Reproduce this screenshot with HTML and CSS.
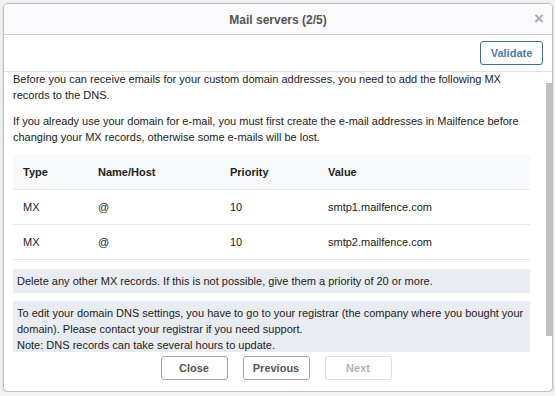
FILE: index.html
```html
<!doctype html>
<html>

<head>
    <title>Mail servers</title>
    <link rel="stylesheet" href="styles.css">
</head>

<body>
    <div class="dialog">
        <div class="dialogHeader">
            <span class="dialogTitle">Mail servers (2/5)</span>
            <span class="closeIcon">&times;</span>
        </div>

        <div class="toolbar">
            <button class="validateButton">Validate</button>
        </div>

        <div class="bodyWrapper">
            <div class="dialogBody" id="dialogBody">
                <div class="content">
                    <p>Before you can receive emails for your custom domain addresses, you need to add the following MX records to the DNS.</p>
                    <p>If you already use your domain for e-mail, you must first create the e-mail addresses in Mailfence before changing your MX records, otherwise some e-mails will be lost.</p>

                    <table class="recordsTable">
                        <thead>
                            <tr>
                                <th class="colType">Type</th>
                                <th class="colName">Name/Host</th>
                                <th class="colPriority">Priority</th>
                                <th>Value</th>
                            </tr>
                        </thead>
                        <tbody>
                            <tr>
                                <td>MX</td>
                                <td>@</td>
                                <td>10</td>
                                <td>smtp1.mailfence.com</td>
                            </tr>
                            <tr>
                                <td>MX</td>
                                <td>@</td>
                                <td>10</td>
                                <td>smtp2.mailfence.com</td>
                            </tr>
                        </tbody>
                    </table>

                    <div class="infoBox">Delete any other MX records. If this is not possible, give them a priority of 20 or more.</div>
                    <div class="infoBox">To edit your domain DNS settings, you have to go to your registrar (the company where you bought your domain). Please contact your registrar if you need support.<br>Note: DNS records can take several hours to update.</div>
                </div>
            </div>
            <div class="scrollThumb"></div>
        </div>

        <div class="dialogFooter">
            <button class="footerButton">Close</button>
            <button class="footerButton">Previous</button>
            <button class="footerButton" disabled>Next</button>
        </div>
    </div>

    <script src="script.js"></script>
</body>

</html>
```

FILE: styles.css
```css
* {
    margin: 0;
    padding: 0;
    box-sizing: border-box;
}

body {
    font: 11px "Liberation Sans", Arial, sans-serif;
    color: #222;
    background-color: #f3f3f4;
    padding: 3px 0 0 3px;
}

.dialog {
    width: 550px;
    height: 389px;
    border: solid 1px #bdbdc2;
    border-radius: 5px;
    background-color: white;
    box-shadow: 0 1px 4px rgba(0, 0, 0, 0.12);
    display: flex;
    flex-direction: column;
    overflow: hidden;
}

.dialogHeader {
    height: 31px;
    flex-shrink: 0;
    background-color: #faf9fc;
    border-bottom: solid 1px #c9c9d2;
    display: flex;
    align-items: center;
    justify-content: center;
    position: relative;
}

.dialogTitle {
    font-size: 12px;
    font-weight: bold;
    color: #555;
    margin-top: 1px;
}

.closeIcon {
    position: absolute;
    right: 8px;
    top: 5px;
    font-size: 17px;
    font-weight: bold;
    color: #adadb2;
}

.toolbar {
    height: 37px;
    flex-shrink: 0;
    border-bottom: solid 1px #e4e4e8;
    display: flex;
    justify-content: flex-end;
    padding: 6px 9px 0 0;
}

.validateButton {
    width: 63px;
    height: 24px;
    border: solid 1px #3f6f96;
    border-radius: 3px;
    background-color: white;
    color: #4d7ca3;
    font: bold 11px "Liberation Sans", Arial, sans-serif;
}

.bodyWrapper {
    height: 280px;
    flex-shrink: 0;
    position: relative;
}

.dialogBody {
    height: 100%;
    overflow: hidden;
}

.scrollThumb {
    position: absolute;
    right: 0;
    top: 11px;
    width: 6px;
    height: 253px;
    background-color: #c1c1c1;
}

.content {
    width: 526px;
    padding: 11px 0 12px 9px;
}

.content p {
    line-height: 16px;
    margin-bottom: 10px;
}

.recordsTable {
    width: 517px;
    border-collapse: collapse;
    margin-bottom: 9px;
}

.recordsTable th {
    background-color: #f8f9fb;
    text-align: left;
    font-weight: bold;
    height: 34px;
    padding-left: 10px;
    border-bottom: solid 1px #e6e8ec;
}

.recordsTable td {
    height: 35px;
    padding-left: 10px;
    border-bottom: solid 1px #e6e8ec;
}

.colType {
    width: 75px;
}

.colName {
    width: 132px;
}

.colPriority {
    width: 98px;
}

.infoBox {
    width: 517px;
    background-color: #e9ecf0;
    padding: 4px 4px;
    line-height: 16px;
    margin-bottom: 8px;
}

.dialogFooter {
    flex: 1;
    display: flex;
    justify-content: center;
    gap: 15px;
    padding-top: 4px;
    padding-right: 4px;
}

.footerButton {
    width: 67px;
    height: 24px;
    border: solid 1px #a5a5a8;
    border-radius: 3px;
    background-color: white;
    color: #555;
    font: bold 11px "Liberation Sans", Arial, sans-serif;
}

.footerButton:disabled {
    border-color: #dcdcde;
    color: #b5b5b8;
}
```

FILE: script.js
```js
document.getElementById('dialogBody').scrollTop = 12;
```
